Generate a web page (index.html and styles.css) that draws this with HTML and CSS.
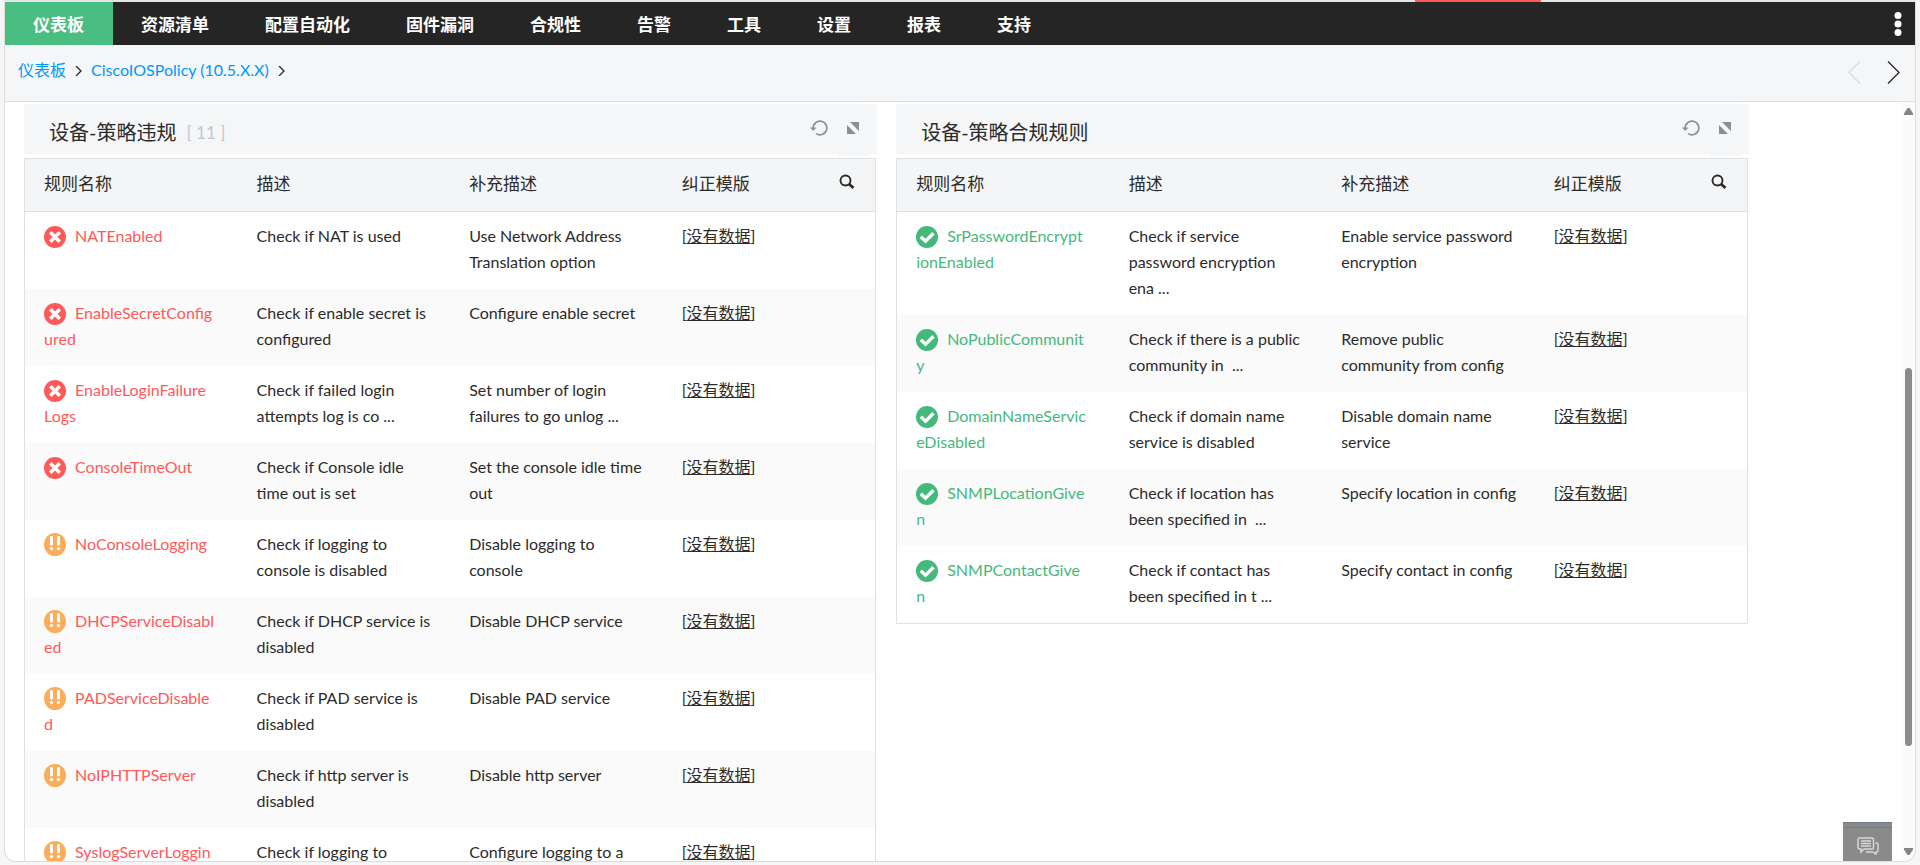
FILE: index.html
```html
<!DOCTYPE html>
<html lang="zh-CN">
  <head>
    <meta charset="UTF-8" />
    <meta name="viewport" content="width=device-width, initial-scale=1.0" />
    <title>CiscoIOSPolicy (10.5.X.X)</title>
    <link rel="stylesheet" href="styles.css" />
  </head>
  <body>
    <!-- Icons shared by the rows and headers -->
    <svg class="sprite" width="0" height="0" aria-hidden="true">
      <symbol id="icon-error" viewBox="0 0 21 21">
        <circle cx="10.5" cy="10.5" r="10.5" fill="#ff5959" />
        <path d="M6 6l9 9M15 6l-9 9" stroke="#fff" stroke-width="3.4" />
      </symbol>
      <symbol id="icon-warn" viewBox="0 0 22 23">
        <ellipse cx="11" cy="11.5" rx="11" ry="11.5" fill="#fbad5c" />
        <path d="M6 3.5q1.5-.8 3 0v8.5q-1.5.8-3 0zM13 3.5q1.5-.8 3 0v8.5q-1.5.8-3 0z" fill="#fff" />
        <circle cx="7.5" cy="15.6" r="1.7" fill="#fff" />
        <circle cx="14.5" cy="15.6" r="1.7" fill="#fff" />
      </symbol>
      <symbol id="icon-ok" viewBox="0 0 22 22">
        <circle cx="11" cy="11" r="11" fill="#45b97c" />
        <path d="M4.8 10.8l4.7 4.4 8-8" fill="none" stroke="#fff" stroke-width="3.4" />
      </symbol>
      <symbol id="icon-refresh" viewBox="0 0 18 16">
        <path d="M3.2 8a6.8 6.8 0 1 1 3 5.6" fill="none" stroke="#8b8f93" stroke-width="1.7" />
        <path d="M0 7.5h6.5L3.3 11z" fill="#8b8f93" />
      </symbol>
      <symbol id="icon-expand" viewBox="0 0 12 12">
        <path d="M3 0h9v9zM0 3v9h9z" fill="#8b8f93" />
      </symbol>
      <symbol id="icon-search" viewBox="0 0 16 16">
        <circle cx="6.5" cy="6.5" r="5" fill="none" stroke="#2b2b2b" stroke-width="1.9" />
        <path d="M10 10l4.5 4" stroke="#2b2b2b" stroke-width="2.8" />
      </symbol>
    </svg>

    <div class="strip"></div>
    <div class="shell">
      <nav class="nav">
        <a class="nav-item active" href="#">仪表板</a>
        <a class="nav-item" href="#">资源清单</a>
        <a class="nav-item" href="#">配置自动化</a>
        <a class="nav-item" href="#">固件漏洞</a>
        <a class="nav-item" href="#">合规性</a>
        <a class="nav-item" href="#">告警</a>
        <a class="nav-item" href="#">工具</a>
        <a class="nav-item" href="#">设置</a>
        <a class="nav-item" href="#">报表</a>
        <a class="nav-item" href="#">支持</a>
        <button class="nav-more" type="button" aria-label="更多">
          <svg width="8" height="24" viewBox="0 0 8 24" fill="#fff">
            <circle cx="4" cy="3.5" r="3.5" />
            <circle cx="4" cy="12" r="3.5" />
            <circle cx="4" cy="20.5" r="3.5" />
          </svg>
        </button>
      </nav>

      <div class="crumbs">
        <a href="#">仪表板</a>
        <svg width="7" height="10" viewBox="0 0 7 10"><path d="M1 0l5 5-5 5" /></svg>
        <a href="#">CiscoIOSPolicy (10.5.X.X)</a>
        <svg width="7" height="10" viewBox="0 0 7 10"><path d="M1 0l5 5-5 5" /></svg>
        <div class="pager">
          <button type="button" aria-label="上一个" disabled>
            <svg width="13" height="23" viewBox="0 0 13 23"><path d="M12 .5l-11 11 11 11" /></svg>
          </button>
          <button type="button" aria-label="下一个">
            <svg width="13" height="23" viewBox="0 0 13 23"><path d="M1 .5l11 11-11 11" /></svg>
          </button>
        </div>
      </div>

      <div class="main">
        <div class="panels">
          <section class="panel">
            <div class="panel-head">
              <h2>设备-策略违规</h2>
              <span class="count">[ 11 ]</span>
              <div class="tools">
                <button type="button" aria-label="刷新"><svg width="18" height="16"><use href="#icon-refresh" /></svg></button>
                <button class="expand" type="button" aria-label="展开"><svg width="12" height="12"><use href="#icon-expand" /></svg></button>
              </div>
            </div>
            <table class="rules violations">
              <thead>
                <tr>
                  <th>规则名称</th>
                  <th>描述</th>
                  <th>补充描述</th>
                  <th>
                    <div class="last-head">纠正模版
                      <button type="button" aria-label="搜索"><svg width="16" height="16"><use href="#icon-search" /></svg></button>
                    </div>
                  </th>
                </tr>
              </thead>
              <tbody>
                <tr>
                  <td><svg class="state" width="22" height="22"><use href="#icon-error" /></svg><a href="#">NATEnabled</a></td>
                  <td>Check if NAT is used</td>
                  <td>Use Network Address Translation option</td>
                  <td>[<a href="#">没有数据</a>]</td>
                </tr>
                <tr>
                  <td><svg class="state" width="22" height="22"><use href="#icon-error" /></svg><a href="#">EnableSecretConfig<br />ured</a></td>
                  <td>Check if enable secret is configured</td>
                  <td>Configure enable secret</td>
                  <td>[<a href="#">没有数据</a>]</td>
                </tr>
                <tr>
                  <td><svg class="state" width="22" height="22"><use href="#icon-error" /></svg><a href="#">EnableLoginFailure<br />Logs</a></td>
                  <td>Check if failed login attempts log is co ...</td>
                  <td>Set number of login failures to go unlog ...</td>
                  <td>[<a href="#">没有数据</a>]</td>
                </tr>
                <tr>
                  <td><svg class="state" width="22" height="22"><use href="#icon-error" /></svg><a href="#">ConsoleTimeOut</a></td>
                  <td>Check if Console idle time out is set</td>
                  <td>Set the console idle time out</td>
                  <td>[<a href="#">没有数据</a>]</td>
                </tr>
                <tr>
                  <td><svg class="state" width="22" height="23"><use href="#icon-warn" /></svg><a href="#">NoConsoleLogging</a></td>
                  <td>Check if logging to console is disabled</td>
                  <td>Disable logging to console</td>
                  <td>[<a href="#">没有数据</a>]</td>
                </tr>
                <tr>
                  <td><svg class="state" width="22" height="23"><use href="#icon-warn" /></svg><a href="#">DHCPServiceDisabl<br />ed</a></td>
                  <td>Check if DHCP service is disabled</td>
                  <td>Disable DHCP service</td>
                  <td>[<a href="#">没有数据</a>]</td>
                </tr>
                <tr>
                  <td><svg class="state" width="22" height="23"><use href="#icon-warn" /></svg><a href="#">PADServiceDisable<br />d</a></td>
                  <td>Check if PAD service is disabled</td>
                  <td>Disable PAD service</td>
                  <td>[<a href="#">没有数据</a>]</td>
                </tr>
                <tr>
                  <td><svg class="state" width="22" height="23"><use href="#icon-warn" /></svg><a href="#">NoIPHTTPServer</a></td>
                  <td>Check if http server is disabled</td>
                  <td>Disable http server</td>
                  <td>[<a href="#">没有数据</a>]</td>
                </tr>
                <tr>
                  <td><svg class="state" width="22" height="23"><use href="#icon-warn" /></svg><a href="#">SyslogServerLoggin</a></td>
                  <td>Check if logging to</td>
                  <td>Configure logging to a</td>
                  <td>[<a href="#">没有数据</a>]</td>
                </tr>
              </tbody>
            </table>
          </section>

          <section class="panel">
            <div class="panel-head">
              <h2>设备-策略合规规则</h2>
              <div class="tools">
                <button type="button" aria-label="刷新"><svg width="18" height="16"><use href="#icon-refresh" /></svg></button>
                <button class="expand" type="button" aria-label="展开"><svg width="12" height="12"><use href="#icon-expand" /></svg></button>
              </div>
            </div>
            <table class="rules compliant">
              <thead>
                <tr>
                  <th>规则名称</th>
                  <th>描述</th>
                  <th>补充描述</th>
                  <th>
                    <div class="last-head">纠正模版
                      <button type="button" aria-label="搜索"><svg width="16" height="16"><use href="#icon-search" /></svg></button>
                    </div>
                  </th>
                </tr>
              </thead>
              <tbody>
                <tr>
                  <td><svg class="state" width="22" height="22"><use href="#icon-ok" /></svg><a href="#">SrPasswordEncrypt<br />ionEnabled</a></td>
                  <td>Check if service password encryption ena&nbsp;...</td>
                  <td>Enable service password encryption</td>
                  <td>[<a href="#">没有数据</a>]</td>
                </tr>
                <tr>
                  <td><svg class="state" width="22" height="22"><use href="#icon-ok" /></svg><a href="#">NoPublicCommunit<br />y</a></td>
                  <td>Check if there is a public community in&nbsp; ...</td>
                  <td>Remove public community from config</td>
                  <td>[<a href="#">没有数据</a>]</td>
                </tr>
                <tr>
                  <td><svg class="state" width="22" height="22"><use href="#icon-ok" /></svg><a href="#">DomainNameServic<br />eDisabled</a></td>
                  <td>Check if domain name service is disabled</td>
                  <td>Disable domain name service</td>
                  <td>[<a href="#">没有数据</a>]</td>
                </tr>
                <tr>
                  <td><svg class="state" width="22" height="22"><use href="#icon-ok" /></svg><a href="#">SNMPLocationGive<br />n</a></td>
                  <td>Check if location has been specified in&nbsp; ...</td>
                  <td>Specify location in config</td>
                  <td>[<a href="#">没有数据</a>]</td>
                </tr>
                <tr>
                  <td><svg class="state" width="22" height="22"><use href="#icon-ok" /></svg><a href="#">SNMPContactGive<br />n</a></td>
                  <td>Check if contact has been specified in t ...</td>
                  <td>Specify contact in config</td>
                  <td>[<a href="#">没有数据</a>]</td>
                </tr>
              </tbody>
            </table>
          </section>
        </div>

        <div class="scrollbar">
          <svg width="9" height="7" viewBox="0 0 9 7"><path d="M0 7V5.5L3.5 0h2L9 5.5V7z" /></svg>
          <div class="track"><div class="thumb"></div></div>
          <svg width="9" height="7" viewBox="0 0 9 7"><path d="M0 0v1.5L3.5 7h2L9 1.5V0z" /></svg>
        </div>
        <button class="chat" type="button" aria-label="聊天">
          <svg width="22" height="18" viewBox="0 0 22 18" fill="none" stroke="#d4d7da" stroke-width="1.5">
            <path d="M1 2.5Q1 1 2.5 1h12.5q1.5 0 1.5 1.5v8q0 1.5-1.5 1.5H7l-3 3v-3H2.5Q1 12 1 10.5z" />
            <path d="M4 4h10M4 6.5h10M4 9h10M18.5 6h1q1.5 0 1.5 1.5v6q0 1.5-1.5 1.5H19v2.5L16 15H9" />
          </svg>
        </button>
      </div>
    </div>
  </body>
</html>
```
FILE: styles.css
```css
* {
  box-sizing: border-box;
}

body {
  display: flex;
  flex-direction: column;
  height: 100vh;
  margin: 0;
  padding: 0 4px 3px;
  overflow: hidden;
  background-color: #f6f6f6;
  color: #2b2b2b;
  font-family: Lato, "Noto Sans CJK SC", sans-serif;
  font-size: 16px;
  line-height: 26px;
}

button {
  display: block;
  padding: 0;
  border: none;
  background: none;
  cursor: pointer;
}

svg {
  display: block;
}

.sprite {
  position: absolute;
}

/* thin line above the menu */
.strip {
  flex: none;
  height: 2px;
  background: linear-gradient(#ff5959, #ff5959) 79% 0 / 126px 2px no-repeat #e2e4e6;
}

.shell {
  display: flex;
  flex: 1;
  flex-direction: column;
  min-height: 0;
  overflow: hidden;
  border: 1px solid #dcdcdc;
  border-top: none;
  border-radius: 0 0 12px 12px;
  background-color: #fff;
}

/* Menu */
.nav {
  display: flex;
  flex: none;
  height: 43px;
  background-color: #252525;
}

.nav-item {
  padding: 0 28px;
  color: #fff;
  font-size: 17px;
  font-weight: bold;
  line-height: 46px;
  text-decoration: none;
}

.nav-item.active {
  min-width: 108px;
  background-color: #4abd81;
}

.nav-more {
  margin-left: auto;
  padding: 0 13px;
}

/* Breadcrumb */
.crumbs {
  display: flex;
  flex: none;
  gap: 9px;
  height: 57px;
  padding: 12px 15px 0 13px;
  border-bottom: 1px solid #dfe0e2;
  background-color: #f5f6f8;
}

.crumbs a {
  color: #0099f7;
  text-decoration: none;
}

.crumbs svg {
  margin-top: 9px;
  fill: none;
  stroke: #252525;
  stroke-width: 1.3px;
}

.pager {
  display: flex;
  gap: 26px;
  align-items: flex-start;
  margin-left: auto;
}

.crumbs .pager svg {
  margin-top: 4px;
}

.pager button:disabled svg {
  stroke: #d9dadc;
}

/* Content */
.main {
  display: flex;
  position: relative;
  flex: 1;
  min-height: 0;
}

.panels {
  display: flex;
  flex: 1;
  gap: 19px;
  align-items: flex-start;
  padding: 2px 8% 0 1%;
  overflow: hidden;
}

.panel {
  flex: 1;
  min-width: 0;
}

.panel-head {
  display: flex;
  gap: 10px;
  height: 50px;
  margin-bottom: 4px;
  padding: 0 9px 0 25px;
  background-color: #f5f6f8;
}

.panel-head h2 {
  margin: 0;
  font-size: 20px;
  font-weight: normal;
  line-height: 56px;
}

.count {
  color: #c4c6c8;
  font-size: 17px;
  line-height: 58px;
}

.tools {
  display: flex;
  gap: 10px;
  height: 52px;
  margin-left: auto;
}

.tools button {
  padding-bottom: 4px;
}

.tools .expand {
  padding: 0 9px 4px;
  background-color: #f5f6f8;
}

.rules {
  width: calc(100% - 1px);
  table-layout: fixed;
  border: 1px solid #dfe0e2;
  border-spacing: 0;
}

.rules th {
  height: 53px;
  padding: 0 19px 2px;
  border-bottom: 1px solid #dfe0e2;
  background-color: #f4f5f7;
  font-size: 17px;
  font-weight: normal;
  text-align: left;
}

.last-head {
  display: flex;
  justify-content: space-between;
}

.last-head button {
  padding: 0 1px 4px;
}

.rules td {
  padding: 11px 16px 14px 19px;
  vertical-align: top;
}

.rules tbody tr:nth-child(even) {
  background-color: #fafafa;
}

.rules a {
  color: #2b2b2b;
}

.rules td:first-child a {
  text-decoration: none;
}

.violations td:first-child a {
  color: #ff5959;
}

.compliant td:first-child a {
  color: #45b97c;
}

.state {
  display: inline-block;
  margin: -2px 9px 0 0;
  vertical-align: middle;
}

/* Scrollbar */
.scrollbar {
  display: flex;
  flex: none;
  flex-direction: column;
  align-items: center;
  width: 13px;
  padding: 6px 0;
  background-color: #fafafa;
  fill: #858585;
}

.track {
  display: flex;
  flex: 1;
}

.thumb {
  width: 7px;
  margin: 253px 0 102px;
  border-radius: 4px;
  background-color: #8b8b8b;
}

.chat {
  display: flex;
  position: absolute;
  right: 23px;
  bottom: 0;
  justify-content: center;
  width: 49px;
  height: 39px;
  padding-top: 14px;
  border-top: 1px solid #6e7a86;
  background: linear-gradient(#6e7a86, #6e7a86) 0 4px / 100% 1px no-repeat #8a8a8a;
}
```
